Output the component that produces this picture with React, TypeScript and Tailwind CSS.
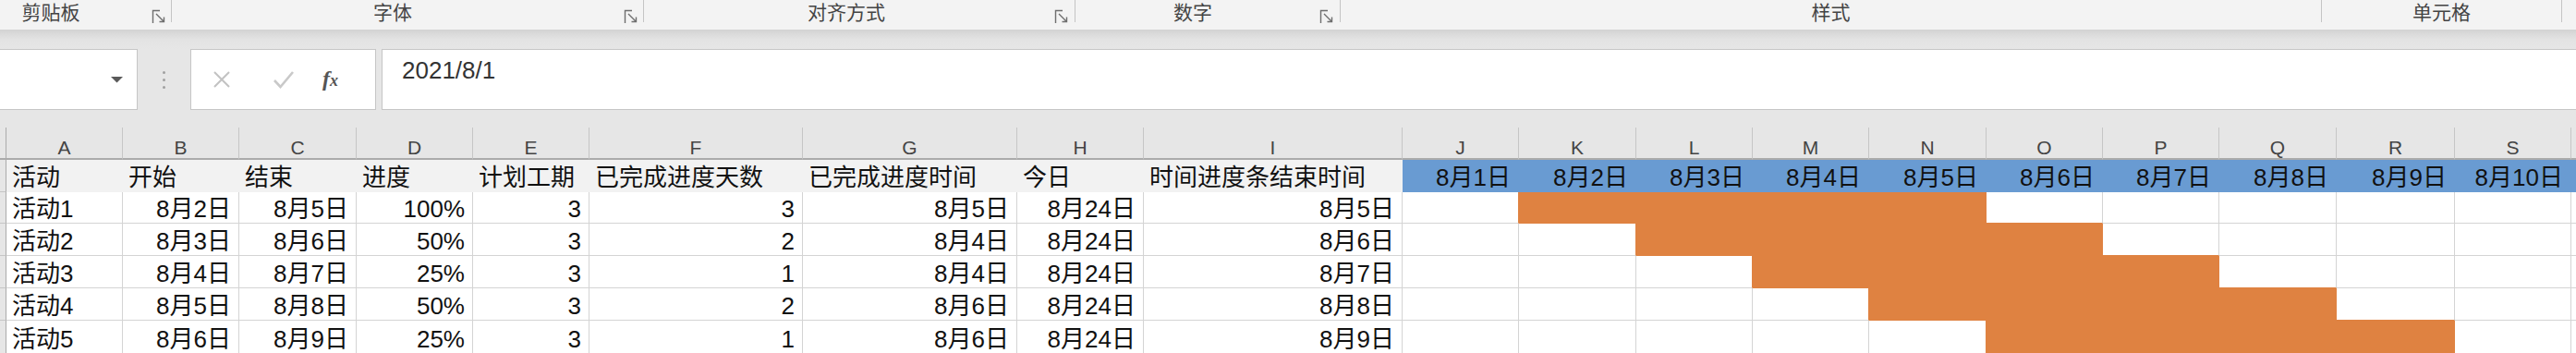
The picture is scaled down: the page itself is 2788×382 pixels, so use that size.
import React from "react"

type Fill = "none" | "head" | "blue" | "orange"

// fill colours, written out so tailwind can pick them up
const BG: Record<Fill, string> = {
    none: "bg-white",
    head: "bg-[#f2f2f2]",
    blue: "bg-[#699bd2]",
    orange: "bg-[#df8241]",
}
const BR: Record<Fill | "grid", string> = {
    grid: "border-r-[#d4d4d4]",
    none: "border-r-[#d4d4d4]",
    head: "border-r-[#f2f2f2]",
    blue: "border-r-[#699bd2]",
    orange: "border-r-[#df8241]",
}
const BB: Record<Fill | "grid", string> = {
    grid: "border-b-[#d4d4d4]",
    none: "border-b-[#d4d4d4]",
    head: "border-b-[#f2f2f2]",
    blue: "border-b-[#699bd2]",
    orange: "border-b-[#df8241]",
}

const ROW_H = ["h-[35px]", "h-[34px]", "h-[35px]", "h-[35px]", "h-[35px]", "h-[36px]"]

const letters = ["A", "B", "C", "D", "E", "F", "G", "H", "I", "J", "K", "L", "M", "N", "O", "P", "Q", "R", "S", ""]

const head = ["活动", "开始", "结束", "进度", "计划工期", "已完成进度天数", "已完成进度时间", "今日", "时间进度条结束时间"]

const data = [
    ["活动1", "8月2日", "8月5日", "100%", "3", "3", "8月5日", "8月24日", "8月5日"],
    ["活动2", "8月3日", "8月6日", "50%", "3", "2", "8月4日", "8月24日", "8月6日"],
    ["活动3", "8月4日", "8月7日", "25%", "3", "1", "8月4日", "8月24日", "8月7日"],
    ["活动4", "8月5日", "8月8日", "50%", "3", "2", "8月6日", "8月24日", "8月8日"],
    ["活动5", "8月6日", "8月9日", "25%", "3", "1", "8月6日", "8月24日", "8月9日"],
]

type Cell = { text: string, fill: Fill, right: boolean }

function buildRows(): Cell[][] {
    const rows: Cell[][] = []
    const top: Cell[] = head.map(t => ({ text: t, fill: "head" as Fill, right: false }))
    for (let d = 1; d <= 10; d++) top.push({ text: `8月${d}日`, fill: "blue", right: true })
    top.push({ text: "", fill: "blue", right: false })
    rows.push(top)

    data.forEach((r, i) => {
        const row: Cell[] = r.map((t, c) => ({ text: t, fill: "none" as Fill, right: c > 0 }))
        for (let d = 1; d <= 10; d++) {
            const on = d >= i + 2 && d <= i + 5
            row.push({ text: "", fill: on ? "orange" : "none", right: false })
        }
        row.push({ text: "", fill: "none", right: false })
        rows.push(row)
    })
    return rows
}

function Launcher() {
    return (
        <svg width="16" height="16" viewBox="0 0 16 16" fill="none" stroke="#6e6e6e" strokeWidth="1.4" className="mt-[10px] shrink-0">
            <path d="M1.5 15V1.5H9" />
            <path d="M5 5L13.5 13.5M13.5 8.5V13.5H8.5" />
        </svg>
    )
}

function Sep() {
    return <div className="w-px h-[24px] bg-[#c4c4c4] shrink-0"></div>
}

export default function App() {
    const rows = buildRows()

    return (
        <div className="w-[2788px] h-[382px] overflow-hidden bg-[#e6e6e6] font-['Liberation_Sans','Noto_Sans_CJK_SC',sans-serif]">

            {/* ribbon group labels */}
            <div className="flex h-[32px] bg-[#f3f3f3] text-[21px] leading-[24px] text-[#444]">
                <div className="flex w-[185px] shrink-0">
                    <div className="w-[110px] text-center pt-[2px]">剪贴板</div>
                    <div className="ml-auto mr-[5px]"><Launcher /></div>
                </div>
                <Sep />
                <div className="flex w-[510px] shrink-0">
                    <div className="w-[478px] text-center pt-[2px]">字体</div>
                    <div className="ml-auto mr-[5px]"><Launcher /></div>
                </div>
                <Sep />
                <div className="flex w-[466px] shrink-0">
                    <div className="w-[438px] text-center pt-[2px]">对齐方式</div>
                    <div className="ml-auto mr-[6px]"><Launcher /></div>
                </div>
                <Sep />
                <div className="flex w-[286px] shrink-0">
                    <div className="w-[254px] text-center pt-[2px]">数字</div>
                    <div className="ml-auto mr-[6px]"><Launcher /></div>
                </div>
                <Sep />
                <div className="w-[1061px] shrink-0 text-center pt-[2px]">样式</div>
                <Sep />
                <div className="w-[259px] shrink-0 text-center pt-[2px]">单元格</div>
                <Sep />
                <div className="flex-1"></div>
            </div>
            <div className="h-[21px] bg-linear-to-b from-[#d3d3d3] via-[#e3e3e3] to-[#e6e6e6]"></div>

            {/* formula bar */}
            <div className="flex h-[66px]">
                <div className="w-[149px] shrink-0 bg-white border border-l-0 border-[#c6c6c6] flex items-center justify-end pr-[15px]">
                    <svg width="13" height="7" viewBox="0 0 13 7"><path d="M0 0H13L6.5 6.5Z" fill="#5a5a5a" /></svg>
                </div>
                <div className="w-[57px] shrink-0 flex flex-col items-center justify-center gap-[5px] pt-[1px]">
                    <div className="w-[3px] h-[3px] rounded-full bg-[#a0a0a0]"></div>
                    <div className="w-[3px] h-[3px] rounded-full bg-[#a0a0a0]"></div>
                    <div className="w-[3px] h-[3px] rounded-full bg-[#a0a0a0]"></div>
                </div>
                <div className="w-[201px] shrink-0 bg-white border border-[#c6c6c6] flex items-center">
                    <svg width="20" height="18" viewBox="0 0 20 18" className="ml-[23px]" stroke="#c2c2c2" strokeWidth="2">
                        <path d="M2 1L18 17M18 1L2 17" />
                    </svg>
                    <svg width="24" height="20" viewBox="0 0 24 20" className="ml-[45px]" fill="none" stroke="#c9c9c9" strokeWidth="2.6">
                        <path d="M2 11L8.5 18L22 2" />
                    </svg>
                    <span className="ml-[30px] italic text-[#555] font-['Liberation_Serif',serif] text-[24px] leading-[28px] font-bold">
                        f<span className="text-[18px]">x</span>
                    </span>
                </div>
                <div className="w-[6px] shrink-0"></div>
                <div className="w-[2500px] shrink-0 bg-white border border-[#c6c6c6] pl-[21px] pt-[7px] text-[26px] leading-[30px] text-[#333]">
                    2021/8/1
                </div>
            </div>
            <div className="h-[19px]"></div>

            {/* sheet */}
            <div className="grid grid-cols-[7px_126px_126px_127px_126px_126px_231px_232px_137px_280px_126px_127px_126px_126px_127px_126px_126px_127px_128px_126px_1fr]">
                <div className="h-[35px] bg-[#e6e6e6] border-r border-r-[#ababab] border-b-2 border-b-[#ababab]"></div>
                {letters.map((l, i) => (
                    <div
                        key={i}
                        className="h-[35px] bg-[#e6e6e6] border-r border-r-[#c6c6c6] border-b-2 border-b-[#ababab] flex justify-center pt-[10px] text-[21px] leading-[24px] text-[#444]"
                    >
                        {l}
                    </div>
                ))}

                {rows.map((row, r) => (
                    <React.Fragment key={r}>
                        <div className={`${ROW_H[r]} bg-[#e6e6e6] border-r border-r-[#ababab] border-b border-b-[#c6c6c6]`}></div>
                        {row.map((cell, c) => {
                            const rightN = row[c + 1]
                            const below = rows[r + 1]?.[c]
                            const rk = cell.fill !== "none" ? cell.fill : rightN && rightN.fill !== "none" ? rightN.fill : "grid"
                            const bk = cell.fill !== "none" ? cell.fill : below && below.fill !== "none" ? below.fill : "grid"
                            return (
                                <div
                                    key={c}
                                    className={`${ROW_H[r]} ${BG[cell.fill]} ${BR[rk]} ${BB[bk]} border-r border-b flex items-end overflow-hidden whitespace-nowrap text-[26px] text-[#111] ${cell.right ? "justify-end pr-[8px]" : "pl-[6px]"}`}
                                >
                                    <span className="leading-[30px]">{cell.text}</span>
                                </div>
                            )
                        })}
                    </React.Fragment>
                ))}
            </div>
        </div>
    )
}
